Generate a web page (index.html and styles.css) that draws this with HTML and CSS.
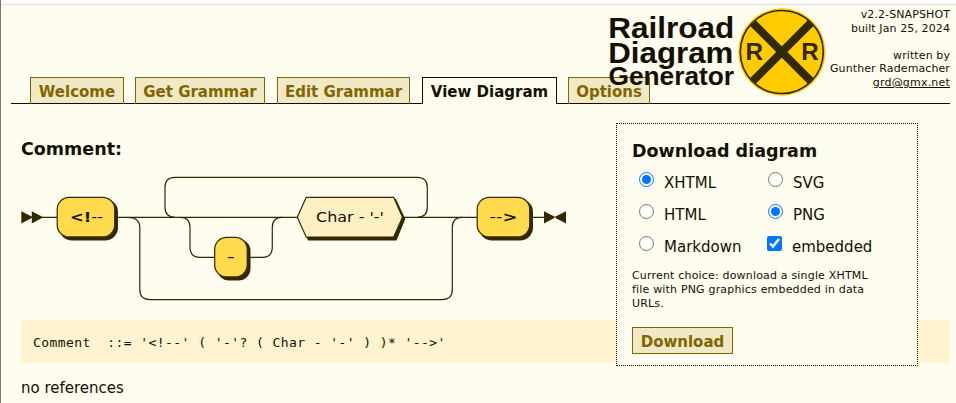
FILE: index.html
```html
<!DOCTYPE html>
<html lang="en">
<head>
<meta charset="utf-8">
<title>Railroad Diagram Generator</title>
<link rel="stylesheet" href="styles.css">
</head>
<body>
<header class="header">
  <nav class="tabs">
    <a class="tab welcome"><span>Welcome</span></a>
    <a class="tab get"><span>Get Grammar</span></a>
    <a class="tab edit"><span>Edit Grammar</span></a>
    <a class="tab view active"><span>View Diagram</span></a>
    <a class="tab options"><span>Options</span></a>
  </nav>
  <div class="brand">
    <svg class="logo" width="220" height="92" viewBox="606 7 220 92">
      <g class="logo-text">
        <text x="608.3" y="37.8" textLength="126" lengthAdjust="spacingAndGlyphs">Railroad</text>
        <text x="608.3" y="62.8" textLength="125" lengthAdjust="spacingAndGlyphs">Diagram</text>
        <text x="608.5" y="84.5" textLength="125.5" lengthAdjust="spacingAndGlyphs">Generator</text>
      </g>
      <circle cx="781.8" cy="52" r="43.7" fill="#ffcc00"/>
      <circle cx="781.8" cy="52" r="41.5" fill="none" stroke="#332900" stroke-width="1.6"/>
      <path d="M753 23.2L810.6 80.8M810.6 23.2L753 80.8" stroke="#332900" stroke-width="8"/>
      <g class="crossing">
        <text x="745.5" y="59.5" textLength="17.5" lengthAdjust="spacingAndGlyphs">R</text>
        <text x="801.3" y="59.5" textLength="17.5" lengthAdjust="spacingAndGlyphs">R</text>
      </g>
    </svg>
    <div class="credits">
      <div>v2.2-SNAPSHOT</div>
      <div>built Jan 25, 2024</div>
      <div>&nbsp;</div>
      <div>written by</div>
      <div>Gunther Rademacher</div>
      <div><a class="mail">grd@gmx.net</a></div>
    </div>
  </div>
</header>
<main class="content">
  <h2 class="rule-name">Comment:</h2>
  <svg class="diagram" width="560" height="140" viewBox="15 167 560 140">
    <g class="rail">
      <path d="M42 217.3H57M117 217.3H297M403 217.3H477M532 217.3H545"/>
      <path d="M127 217.3q12.8 0 12.8 10V289.6q0 10 10 10H442.3q10 0 10-10V227.3q0-10 10-10"/>
      <path d="M175 217.3q-10 0-10-10V187.3q0-10 10-10H417.3q10 0 10 10V207.3q0 10-10 10"/>
      <path d="M180 217.3q10 0 10 10V247.3q0 10 10 10H215M249 257.3H262.3q10 0 10-10V227.3q0-10 10-10"/>
    </g>
    <path class="dark" d="M21.3 211.2L33 217.3L21.3 223.4ZM31.8 211.2L43.3 217.3L31.8 223.4ZM544 211.2L555.8 217.3L544 223.4ZM566 211.2L554 217.3L566 223.4Z"/>
    <g class="dark">
      <rect x="59" y="199" width="59" height="41.5" rx="13"/>
      <rect x="217" y="239" width="33.5" height="41.5" rx="12"/>
      <rect x="479" y="199" width="54" height="41.5" rx="13"/>
      <path d="M299 219L308 199H396L405.3 219L396.5 240.5H308Z"/>
    </g>
    <g class="terminal">
      <rect x="57.2" y="197.3" width="57.5" height="39.6" rx="12"/>
      <rect x="214.7" y="237.3" width="32.5" height="39.6" rx="12"/>
      <rect x="477.2" y="197.3" width="52.5" height="39.6" rx="12"/>
    </g>
    <path class="nonterminal" d="M297.3 217.3L306.2 197.3H393.7L402.5 217.3L393.7 237H306.2Z"/>
    <g class="labels">
      <text x="70" y="221.7" textLength="33" lengthAdjust="spacingAndGlyphs"><tspan class="bold">&lt;!</tspan>--</text>
      <text x="226.8" y="261.5" textLength="8" lengthAdjust="spacingAndGlyphs">-</text>
      <text x="316" y="221.9" textLength="68" lengthAdjust="spacingAndGlyphs">Char - '-'</text>
      <text x="489.5" y="221.7" textLength="28" lengthAdjust="spacingAndGlyphs">--<tspan class="bold">&gt;</tspan></text>
    </g>
  </svg>
  <pre class="ebnf">Comment  ::= '&lt;!--' ( '-'? ( Char - '-' ) )* '--&gt;'</pre>
  <p class="references">no references</p>
</main>
<form class="download">
  <h3>Download diagram</h3>
  <div class="choices">
    <label><input type="radio" name="page" checked><span>XHTML</span></label>
    <label><input type="radio" name="image"><span>SVG</span></label>
    <label><input type="radio" name="page"><span>HTML</span></label>
    <label><input type="radio" name="image" checked><span>PNG</span></label>
    <label><input type="radio" name="page"><span>Markdown</span></label>
    <label class="embed"><input type="checkbox" checked><span>embedded</span></label>
  </div>
  <p class="hint">Current choice: download a single XHTML<br>file with PNG graphics embedded in data<br>URLs.</p>
  <button type="button">Download</button>
</form>
</body>
</html>
```
FILE: styles.css
```css
* { box-sizing: border-box; }
html { background: #fff; }
body {
  position: relative;
  height: 403px;
  margin: 0;
  overflow: hidden;
  border-left: 1px solid #77757a;
  background: linear-gradient(#fff 4px, #dedede 4px, #dedede 5px, #fffdf0 5px);
  color: #141000;
  font-family: Verdana, "DejaVu Sans", sans-serif;
  font-size: 15px;
}
.header {
  height: 104px;
  margin: 0 6px 0 10px;
  border-bottom: 1px solid #141000;
  display: flex;
  align-items: flex-end;
}
.tabs {
  display: flex;
  padding-left: 19px;
  margin-bottom: -1px;
}
.tab {
  height: 27px;
  border: 1px solid #806600;
  border-bottom: 0;
  background: #f1e8c6;
  color: #806600;
  font-weight: bold;
  font-size: 15px;
  line-height: 28px;
  text-align: center;
  white-space: nowrap;
  background-clip: padding-box;
  box-shadow: inset 0 -1px #141000;
}
.tab.active {
  border-color: #141000;
  background: #fffdf0;
  color: #141000;
  box-shadow: none;
}
.welcome { width: 94px; margin-right: 11px; }
.get { width: 130px; margin-right: 12px; }
.edit { width: 133px; margin-right: 12px; }
.view { width: 135px; margin-right: 11px; }
.options { width: 82px; }
.brand {
  position: absolute;
  top: 7px;
  right: 5px;
  display: flex;
}
.logo { display: block; }
.logo-text { font: bold 29px Arial, "Liberation Sans", sans-serif; fill: #141000; }
.logo-text text:nth-child(3) { font-size: 25px; }
.crossing { font: bold 24px Arial, "Liberation Sans", sans-serif; fill: #332900; }
.credits {
  width: 125px;
  padding-right: 1px;
  padding-top: 1px;
  font-size: 11px;
  line-height: 13.6px;
  letter-spacing: 0.1px;
  white-space: nowrap;
  display: flex;
  flex-direction: column;
  align-items: flex-end;
}
.mail { text-decoration: underline; letter-spacing: 0.2px; }
.content { padding: 0 6px 0 20px; }
.rule-name {
  margin: 0;
  padding-top: 34px;
  height: 63px;
  font-size: 17.5px;
  line-height: 22px;
}
.diagram { display: block; margin-left: -6px; }
.rail { fill: none; stroke: #332900; stroke-width: 1.2; }
.dark { fill: #332900; }
.terminal { fill: #ffdb4d; stroke: #332900; stroke-width: 1.2; }
.nonterminal { fill: #fff0c4; stroke: #332900; stroke-width: 1.2; }
.labels { font-size: 14px; fill: #141000; }
.bold { font-weight: bold; }
.ebnf {
  height: 43px;
  margin: 13px 0 0;
  padding-left: 12px;
  background: #fff3d0;
  font: 13px/45px "DejaVu Sans Mono", monospace;
  letter-spacing: 0.43px;
}
.references { margin: 15px 0 0; line-height: 20px; font-size: 15px; }
.download {
  position: absolute;
  top: 123px;
  left: 615px;
  width: 302px;
  height: 243px;
  padding: 16px 15px 0;
  border: 1px dotted #141000;
  background: #fffdf0;
}
.download h3 { margin: 0; font-size: 17.5px; line-height: 23px; }
.choices {
  display: grid;
  grid-template-columns: 129px 120px;
  grid-auto-rows: 32px;
  padding: 3px 0 0 7px;
}
.choices label { display: flex; align-items: center; white-space: nowrap; }
.choices label span { padding-top: 2px; }
.choices input {
  width: 15px;
  height: 15px;
  margin: 0 10px 5px 0;
  accent-color: #0075ff;
}
.choices .embed input { margin-left: -1px; }
.hint {
  margin: 7px 0 0;
  font-size: 11px;
  line-height: 14px;
  letter-spacing: 0.18px;
  white-space: nowrap;
}
.download button {
  display: block;
  width: 101px;
  height: 27px;
  margin-top: 16px;
  padding: 2px 0 0;
  border: 1px solid #806600;
  background: #f1e8c6;
  color: #806600;
  font: bold 15px/25px Verdana, "DejaVu Sans", sans-serif;
}
```
